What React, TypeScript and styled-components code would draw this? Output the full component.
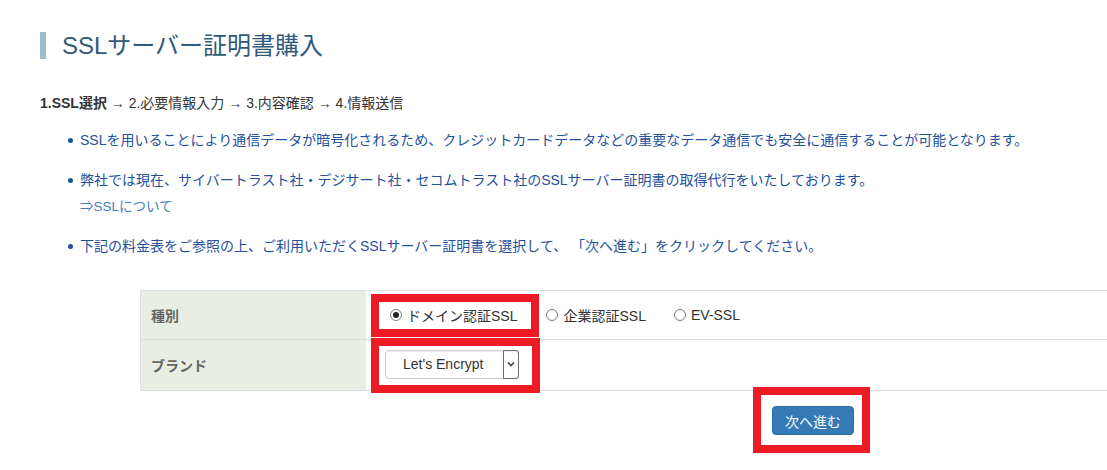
import React from "react";
import styled, { createGlobalStyle } from "styled-components";

const GlobalStyle = createGlobalStyle`
  html, body {
    margin: 0;
    padding: 0;
    background: #fff;
    overflow: hidden;
  }
  body {
    font-family: "Liberation Sans", "Noto Sans CJK JP", sans-serif;
    font-size: 14px;
    color: #333;
  }
`;

const notes = [
  "SSLを用いることにより通信データが暗号化されるため、クレジットカードデータなどの重要なデータ通信でも安全に通信することが可能となります。",
  "弊社では現在、サイバートラスト社・デジサート社・セコムトラスト社のSSLサーバー証明書の取得代行をいたしております。",
  "下記の料金表をご参照の上、ご利用いただくSSLサーバー証明書を選択して、 「次へ進む」をクリックしてください。",
];

const App = () => {
  const [kind, setKind] = React.useState<string>("domain");

  return (
    <>
      <GlobalStyle />
      <Page>
        <Title>SSLサーバー証明書購入</Title>
        <Steps>
          <b>1.SSL選択</b> → 2.必要情報入力 → 3.内容確認 → 4.情報送信
        </Steps>
        <Notes>
          {notes.map((note, i) => (
            <Note key={i}>
              {note}
              {i === 1 && <SubLink href="#">⇒SSLについて</SubLink>}
            </Note>
          ))}
        </Notes>

        <FormTable>
          <Label $h={49}>種別</Label>
          <Value $h={49}>
            <Highlight $pad="0 14px 0 11px">
              <Option onClick={() => setKind("domain")}>
                <RadioMark $checked={kind === "domain"} />
                ドメイン認証SSL
              </Option>
            </Highlight>
            <Option $gap={7} onClick={() => setKind("corp")}>
              <RadioMark $checked={kind === "corp"} />
              企業認証SSL
            </Option>
            <Option $gap={28} onClick={() => setKind("ev")}>
              <RadioMark $checked={kind === "ev"} />
              EV-SSL
            </Option>
          </Value>
          <Label $h={51}>ブランド</Label>
          <Value $h={51}>
            <Highlight $pad="4px 13px 6px 6px">
              <SelectBox>
                Let's Encrypt
                <ArrowBox>
                  <svg width="8" height="6" viewBox="0 0 8 6">
                    <path d="M1 1.5 L4 4.5 L7 1.5" fill="none" stroke="#444" strokeWidth="1.6" />
                  </svg>
                </ArrowBox>
              </SelectBox>
            </Highlight>
          </Value>
        </FormTable>

        <Actions>
          <Highlight $pad="11px 8px 10px 11px">
            <NextButton>次へ進む</NextButton>
          </Highlight>
        </Actions>
      </Page>
    </>
  );
};

export default App;

const Page = styled.div`
  padding: 32px 0 0 40px;
`;

const Title = styled.h1`
  margin: 0;
  height: 27px;
  line-height: 27px;
  border-left: 6px solid #9ebfc6;
  padding-left: 16px;
  font-size: 24px;
  font-weight: normal;
  color: #2f5a7b;
`;

const Steps = styled.div`
  margin-top: 34px;
  height: 20px;
  line-height: 20px;
  font-size: 14px;
  color: #333;
  b {
    font-weight: bold;
  }
`;

const Notes = styled.ul`
  margin: 17px 0 0;
  padding: 0 0 0 40px;
  list-style: none;
`;

const Note = styled.li`
  position: relative;
  line-height: 20px;
  color: #24519d;
  margin-bottom: 20px;
  &:last-child {
    margin-bottom: 0;
  }
  &::before {
    content: "";
    position: absolute;
    left: -12px;
    top: 8px;
    width: 5px;
    height: 5px;
    border-radius: 50%;
    background: #24519d;
  }
`;

const SubLink = styled.a`
  display: block;
  margin-top: 8px;
  line-height: 18px;
  height: 18px;
  font-size: 13.5px;
  color: #4a7cbd;
  text-decoration: none;
`;

const FormTable = styled.div`
  margin: 34px 0 0 100px;
  display: grid;
  grid-template-columns: 226px 1fr;
  border-top: 1px solid #ddd;
`;

const Label = styled.div<{ $h: number }>`
  height: ${(p) => p.$h}px;
  box-sizing: border-box;
  display: flex;
  align-items: center;
  padding-left: 10px;
  background: #e9eee5;
  border-left: 1px solid #dde2da;
  border-bottom: 1px solid #ddd;
  font-weight: bold;
  color: #666;
`;

const Value = styled.div<{ $h: number }>`
  height: ${(p) => p.$h}px;
  box-sizing: border-box;
  display: flex;
  align-items: center;
  padding-left: 5px;
  border-bottom: 1px solid #ddd;
`;

const Highlight = styled.div<{ $pad: string }>`
  display: inline-flex;
  align-items: center;
  flex-shrink: 0;
  border: 8px solid #ed1c24;
  padding: ${(p) => p.$pad};
  min-height: 27px;
  background: #fff;
`;

const Option = styled.label<{ $gap?: number }>`
  display: inline-flex;
  align-items: center;
  gap: 5px;
  margin-left: ${(p) => p.$gap || 0}px;
  height: 27px;
  font-size: 14px;
  color: #333;
  cursor: pointer;
`;

const RadioMark = styled.span<{ $checked?: boolean }>`
  width: 12px;
  height: 12px;
  box-sizing: border-box;
  border: 1px solid #7a7a7a;
  border-radius: 50%;
  display: inline-flex;
  align-items: center;
  justify-content: center;
  &::after {
    content: "";
    width: 6px;
    height: 6px;
    border-radius: 50%;
    background: #222;
    display: ${(p) => (p.$checked ? "block" : "none")};
  }
`;

const SelectBox = styled.div`
  width: 134px;
  height: 29px;
  box-sizing: border-box;
  display: flex;
  align-items: center;
  justify-content: space-between;
  padding-left: 17px;
  border: 1px solid #ccc;
  border-radius: 4px;
  box-shadow: inset 0 1px 1px rgba(0, 0, 0, 0.075);
  font-size: 14px;
  color: #333;
`;

const ArrowBox = styled.span`
  align-self: stretch;
  width: 16px;
  margin: -1px -1px -1px 0;
  box-sizing: border-box;
  border: 1px solid #6f6f6f;
  border-radius: 0 3px 3px 0;
  display: flex;
  align-items: center;
  justify-content: center;
`;

const Actions = styled.div`
  margin: -4px 0 0 100px;
  padding-left: 613px;
  display: flex;
`;

const NextButton = styled.button`
  width: 82px;
  height: 29px;
  border: 1px solid #2e6da4;
  border-radius: 4px;
  background: #337ab7;
  color: #fff;
  font-family: inherit;
  font-size: 14px;
  padding: 0;
  cursor: pointer;
`;
